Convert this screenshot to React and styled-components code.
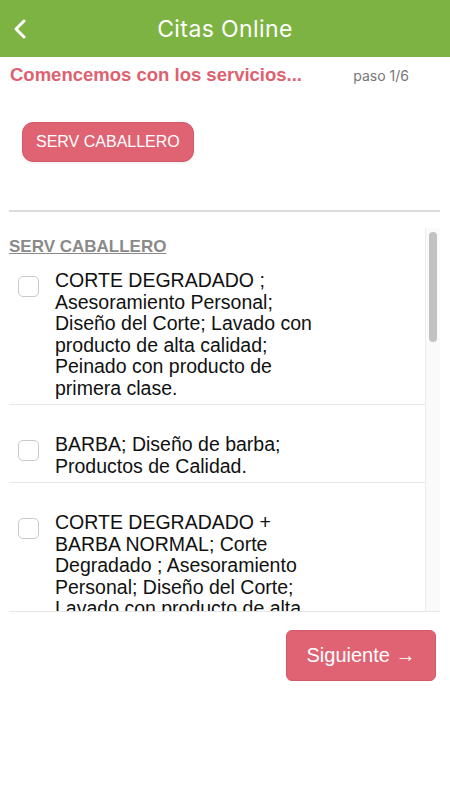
import styled, { createGlobalStyle } from "styled-components";

const GlobalStyle = createGlobalStyle`
  body {
    margin: 0;
    background: #ffffff;
    font-family: Inter, "Liberation Sans", sans-serif;
  }
`;

const services = [
  "CORTE DEGRADADO ; Asesoramiento Personal; Diseño del Corte; Lavado con producto de alta calidad; Peinado con producto de primera clase.",
  "BARBA; Diseño de barba; Productos de Calidad.",
  "CORTE DEGRADADO + BARBA NORMAL; Corte Degradado ; Asesoramiento Personal; Diseño del Corte; Lavado con producto de alta calidad; Peinado con producto de primera clase.",
];

const App = () => {
  return (
    <Page>
      <GlobalStyle />
      <TopBar>
        <BackButton aria-label="volver">
          <svg width="14" height="20" viewBox="0 0 14 20">
            <path
              d="M11 2 L3 10 L11 18"
              fill="none"
              stroke="#fff"
              strokeWidth="3"
              strokeLinecap="round"
              strokeLinejoin="round"
            />
          </svg>
        </BackButton>
        <Title>Citas Online</Title>
        <span />
      </TopBar>

      <StepRow>
        <Headline>Comencemos con los servicios...</Headline>
        <Step>paso 1/6</Step>
      </StepRow>

      <Categories>
        <CategoryButton>SERV CABALLERO</CategoryButton>
      </Categories>

      <Divider />

      <ListFrame>
        <List>
          <SectionTitle>SERV CABALLERO</SectionTitle>
          {services.map((s, i) => (
            <Item key={i} $first={i === 0}>
              <Check type="checkbox" />
              <ItemText>{s}</ItemText>
            </Item>
          ))}
        </List>
        <Track>
          <Thumb />
        </Track>
      </ListFrame>

      <Footer>
        <NextButton>Siguiente →</NextButton>
      </Footer>
    </Page>
  );
};
export default App;

const Page = styled.div`
  width: 450px;
  height: 800px;
  background: #fff;
`;

const TopBar = styled.div`
  height: 57px;
  background: #7cb342;
  display: grid;
  grid-template-columns: 44px 1fr 44px;
  align-items: center;
`;

const BackButton = styled.button`
  border: none;
  background: none;
  padding: 0 0 0 13px;
  display: flex;
  align-items: center;
  height: 30px;
  cursor: pointer;
`;

const Title = styled.div`
  text-align: center;
  color: #fff;
  font-size: 23px;
  font-weight: 400;
  letter-spacing: 0.4px;
`;

const StepRow = styled.div`
  display: flex;
  justify-content: space-between;
  align-items: center;
  padding: 7px 41px 0 10px;
  height: 22px;
`;

const Headline = styled.div`
  color: #de6170;
  font-family: "Liberation Sans", Arial, sans-serif;
  font-weight: bold;
  font-size: 18.5px;
`;

const Step = styled.div`
  color: #777;
  font-size: 14px;
`;

const Categories = styled.div`
  padding: 36px 0 0 22px;
`;

const CategoryButton = styled.button`
  height: 40px;
  padding: 0 13px;
  border-radius: 11px;
  border: 1px solid #d45867;
  background: #e06373;
  color: #fff;
  font-family: "Liberation Sans", Arial, sans-serif;
  font-size: 16px;
  box-shadow: 0 1px 3px rgba(0, 0, 0, 0.08);
`;

const Divider = styled.div`
  margin: 48px 10px 0 9px;
  height: 2px;
  background: #dcdcdc;
`;

const ListFrame = styled.div`
  margin: 16px 10px 0 9px;
  height: 383px;
  display: flex;
  border-bottom: 1px solid #e6e6e6;
`;

const List = styled.div`
  flex: 1;
  overflow: hidden;
`;

const SectionTitle = styled.div`
  color: #8a8a8a;
  font-family: "Liberation Sans", Arial, sans-serif;
  font-weight: bold;
  font-size: 17px;
  text-decoration: underline;
  padding-top: 9px;
  line-height: 20px;
`;

const Item = styled.div`
  display: flex;
  align-items: flex-start;
  gap: 16px;
  padding: ${(p) => (p.$first ? "13px" : "29px")} 0 5px 9px;
  border-bottom: 1px solid #e8e8e8;
`;

const Check = styled.input`
  appearance: none;
  flex: none;
  width: 21px;
  height: 21px;
  margin: 6px 0 0 0;
  border: 1px solid #c9c9c9;
  border-radius: 5px;
  background: #fff;
`;

const ItemText = styled.div`
  width: 280px;
  font-family: "Liberation Sans", Arial, sans-serif;
  font-size: 19.5px;
  line-height: 21.5px;
  color: #111;
`;

const Track = styled.div`
  width: 15px;
  flex: none;
  background: #fafafa;
  border-left: 1px solid #ececec;
  padding: 4px 0 0 3px;
  box-sizing: border-box;
`;

const Thumb = styled.div`
  width: 8px;
  height: 110px;
  border-radius: 4px;
  background: #c2c2c2;
`;

const Footer = styled.div`
  display: flex;
  justify-content: flex-end;
  padding: 18px 14px 0 0;
`;

const NextButton = styled.button`
  width: 150px;
  height: 51px;
  border-radius: 6px;
  border: 1px solid #d45867;
  background: #e06373;
  color: #fff;
  font-family: "Liberation Sans", Arial, sans-serif;
  font-size: 20px;
`;
